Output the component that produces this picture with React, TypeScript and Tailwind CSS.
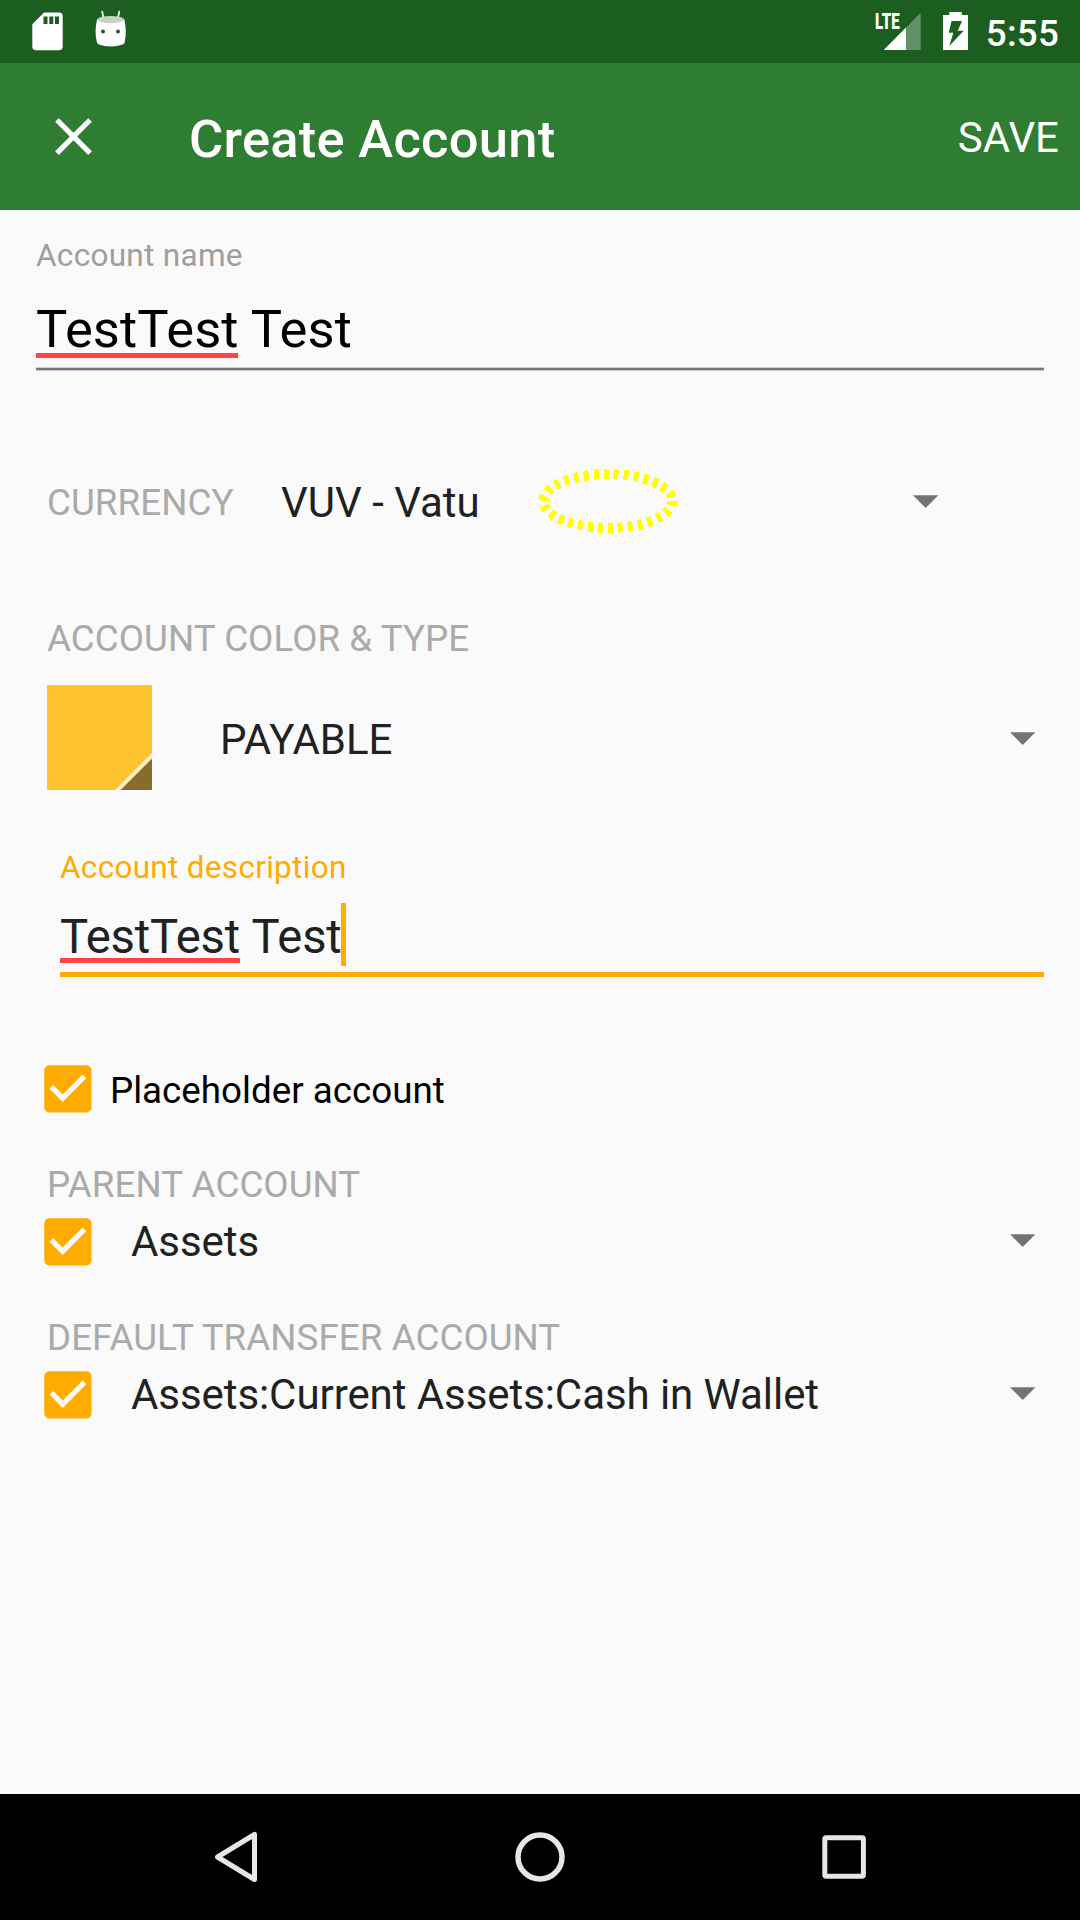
import React from "react";

function CheckBox() {
  return (
    <svg className="h-[63px] w-[63px] shrink-0" viewBox="-0.15 -0.1 24 24" fill="#ffab00">
      <path d="M19 3H5c-1.11 0-2 .9-2 2v14c0 1.1.89 2 2 2h14c1.11 0 2-.9 2-2V5c0-1.1-.89-2-2-2zm-9 14l-5-5 1.41-1.41L10 14.17l7.59-7.59L19 8l-9 9z" />
    </svg>
  );
}

function Caret() {
  return (
    <svg className="mb-0.5 h-[13px] w-[26px] shrink-0" viewBox="0 0 26 13" fill="#737373">
      <path d="M0 .2h25.400L12.700 13z" />
    </svg>
  );
}

function StatusBar() {
  return (
    <div className="flex h-[63px] items-start bg-[#1b5e20] text-white">
      <svg className="ml-8 mt-3 h-[39px] w-[31px]" viewBox="0 0 31 39">
        <path fill="#fff" d="M12 .5h15a3.7 3.7 0 0 1 3.7 3.7v30.4a3.7 3.7 0 0 1-3.7 3.7H4A3.7 3.7 0 0 1 .3 34.600V12.200z" />
        <path fill="#1b5e20" d="M11.500 4.500h4v7.500h-4zM17.300 4.500h4v7.500h-4zM23 4.500h4v7.500h-4z" />
      </svg>
      <svg className="ml-8 mt-2.5 h-[38px] w-[32px]" viewBox="0 0 32 38">
        <path d="M7.200 1.500l1.300 7M24.300 1.500l-1.500 7" stroke="#fff" strokeWidth="1.700" strokeLinecap="round" />
        <path fill="#fff" d="M2.200 9C.2 17 0 24.500 1.800 32c.3 1.300 1 2 2.200 2.600 7 2.600 16.500 2.600 23.500 0 1.200-.5 1.900-1.300 2.200-2.600C31.300 24.500 31.100 17 29.300 9z" />
        <ellipse cx="15.700" cy="9.600" rx="13.300" ry="3.700" fill="#c3d5c4" />
        <circle cx="8" cy="21.500" r="2" fill="#1b5e20" />
        <circle cx="23" cy="21.500" r="2" fill="#1b5e20" />
      </svg>
      <div className="relative ml-auto mt-3 h-[39px] w-[46px]">
        <svg className="h-[39px] w-[46px]" viewBox="0 0 46 39">
          <path fill="#629165" d="M45.700 .7V38H9z" />
          <path fill="#fff" d="M31 15.600V38H8.700z" />
        </svg>
        <span className="absolute left-0 top-0 origin-top-left scale-x-[0.67] text-[22.500px] font-black leading-[18px]">LTE</span>
      </div>
      <svg className="ml-[22px] mt-3 h-[38px] w-[25px]" viewBox="0 0 25 38">
        <path fill="#fff" d="M6.300 0h12.500v3H25v35H0V3h6.300z" />
        <path fill="#1b5e20" d="M8.500 9h10.500l-4.300 9.700h6L6.300 34l4-13.300H5.800z" />
      </svg>
      <span className="ml-[18px] mr-[21px] mt-3 text-[36.750px] font-medium leading-[43px] tracking-[0.200px]">5:55</span>
    </div>
  );
}

function AppBar() {
  return (
    <div className="flex h-[147px] items-center bg-[#2e7d32] pl-[42px] pr-[21px] text-white">
      <svg className="h-[63px] w-[63px]" viewBox="0 0 24 24" fill="#fff">
        <path d="M19 6.410L17.590 5 12 10.590 6.410 5 5 6.410 10.590 12 5 17.590 6.410 19 12 13.410 17.590 19 19 17.590 13.410 12z" />
      </svg>
      <h1 className="ml-[84px] mt-1 text-[52.500px] font-medium leading-[60px] tracking-[0.270px]">Create Account</h1>
      <button className="ml-auto mt-[3px] text-[42px] leading-[48px]">SAVE</button>
    </div>
  );
}

function Label({ children }: { children: React.ReactNode }) {
  return (
    <div className="pl-[47px] text-[36.750px] leading-[43px] tracking-[0.050px] text-[#aaaaaa]">{children}</div>
  );
}

function AccountRow({ name }: { name: string }) {
  return (
    <div className="flex h-[63px] items-center pl-9 pr-[44px] text-[42px] leading-[48px] text-[#212121]">
      <CheckBox />
      <span className="ml-8 tracking-[-0.070px]">{name}</span>
      <span className="ml-auto flex">
        <Caret />
      </span>
    </div>
  );
}

function NavBar() {
  return (
    <div className="flex h-[126px] items-center justify-between bg-black pl-[212px] pr-[211px]">
      <svg className="h-[54px] w-[47px]" viewBox="0 0 47 54" fill="none" stroke="#e6e6e6" strokeWidth="5" strokeLinejoin="round">
        <path d="M42.500 4.500v45L5.500 27z" />
      </svg>
      <svg className="h-[54px] w-[54px]" viewBox="0 0 54 54" fill="none" stroke="#e6e6e6" strokeWidth="5.500">
        <circle cx="27" cy="27" r="22" />
      </svg>
      <svg className="h-[54px] w-[48px]" viewBox="0 0 48 54" fill="none" stroke="#e6e6e6" strokeWidth="5">
        <rect x="3.800" y="7.700" width="38.600" height="38.600" rx="1.500" />
      </svg>
    </div>
  );
}

export default function App() {
  return (
    <div className="flex h-[1920px] w-[1080px] flex-col bg-[#fafafa] font-[Roboto,sans-serif]">
      <StatusBar />
      <AppBar />
      <main className="flex-1 pt-7">
        <section className="ml-9 mr-9">
          <div className="text-[31.500px] leading-9 tracking-[0.300px] text-[#9e9e9e]">Account name</div>
          <div className="mt-[25px] h-[68px] text-[52.500px] leading-[60px] tracking-[0.100px] text-black">
            <span className="relative inline-block">
              TestTest
              <span className="absolute left-0 top-[54px] h-[5px] w-[202px] bg-[#ff4444]" />
            </span>{" "}
            Test
          </div>
          <div className="h-1 border-y border-[#cfcfcf] bg-[#757575]" />
        </section>

        <section className="mt-[98px] flex h-[66px] items-center text-[42px] leading-[48px] text-[#212121]">
          <Label>CURRENCY</Label>
          <span className="ml-[47.500px] mt-0.5">VUV - Vatu</span>
          <svg className="mb-0.5 ml-[57px] h-[66px] w-[142px] shrink-0" viewBox="0 0 142 66" shapeRendering="crispEdges">
            <ellipse cx="71" cy="33" rx="64.500" ry="27" fill="none" stroke="#ffff00" strokeWidth="10" strokeDasharray="5 5" />
          </svg>
          <span className="ml-auto mr-[141px] mt-px flex">
            <Caret />
          </span>
        </section>

        <section className="mt-[82px]">
          <Label>ACCOUNT COLOR &amp; TYPE</Label>
          <div className="mt-[25px] flex h-[105px] items-center pl-[47px] pr-[44px] text-[42px] leading-[48px] text-[#212121]">
            <svg className="h-[105px] w-[105px]" viewBox="0 0 105 105">
              <path fill="#fdc42f" d="M0 0h105v105H0z" />
              <path fill="#fff1cd" d="M105 68v37H68z" />
              <path fill="#866c2f" d="M105 73.500v31.500H73.500z" />
            </svg>
            <span className="ml-[68px] mt-1">PAYABLE</span>
            <span className="ml-auto mt-1 flex">
              <Caret />
            </span>
          </div>
        </section>

        <section className="ml-[60px] mr-9 mt-[60px]">
          <div className="text-[31.500px] leading-9 tracking-[0.300px] text-[#ffab00]">Account description</div>
          <div className="mt-6 h-[62px] text-[47.250px] leading-[54px] tracking-[-0.200px] text-[#212121]">
            <span className="relative inline-block">
              TestTest
              <span className="absolute left-0 top-[48px] h-[5px] w-[180px] bg-[#ff4444]" />
            </span>{" "}
            <span className="relative inline-block">
              Test
              <span className="absolute -right-1 -top-[7px] h-[63px] w-[5px] bg-[#ffab00]" />
            </span>
          </div>
          <div className="h-[5px] bg-[#ffab00]" />
        </section>

        <section className="mt-[80px] flex h-[63px] items-center pl-9 text-[36.750px] leading-[43px] text-black">
          <CheckBox />
          <span className="ml-[11px] mt-[3px]">Placeholder account</span>
        </section>

        <section className="mt-[43px]">
          <Label>PARENT ACCOUNT</Label>
          <div className="mt-1">
            <AccountRow name="Assets" />
          </div>
        </section>

        <section className="mt-[43px]">
          <Label>DEFAULT TRANSFER ACCOUNT</Label>
          <div className="mt-1">
            <AccountRow name="Assets:Current Assets:Cash in Wallet" />
          </div>
        </section>
      </main>
      <NavBar />
    </div>
  );
}
